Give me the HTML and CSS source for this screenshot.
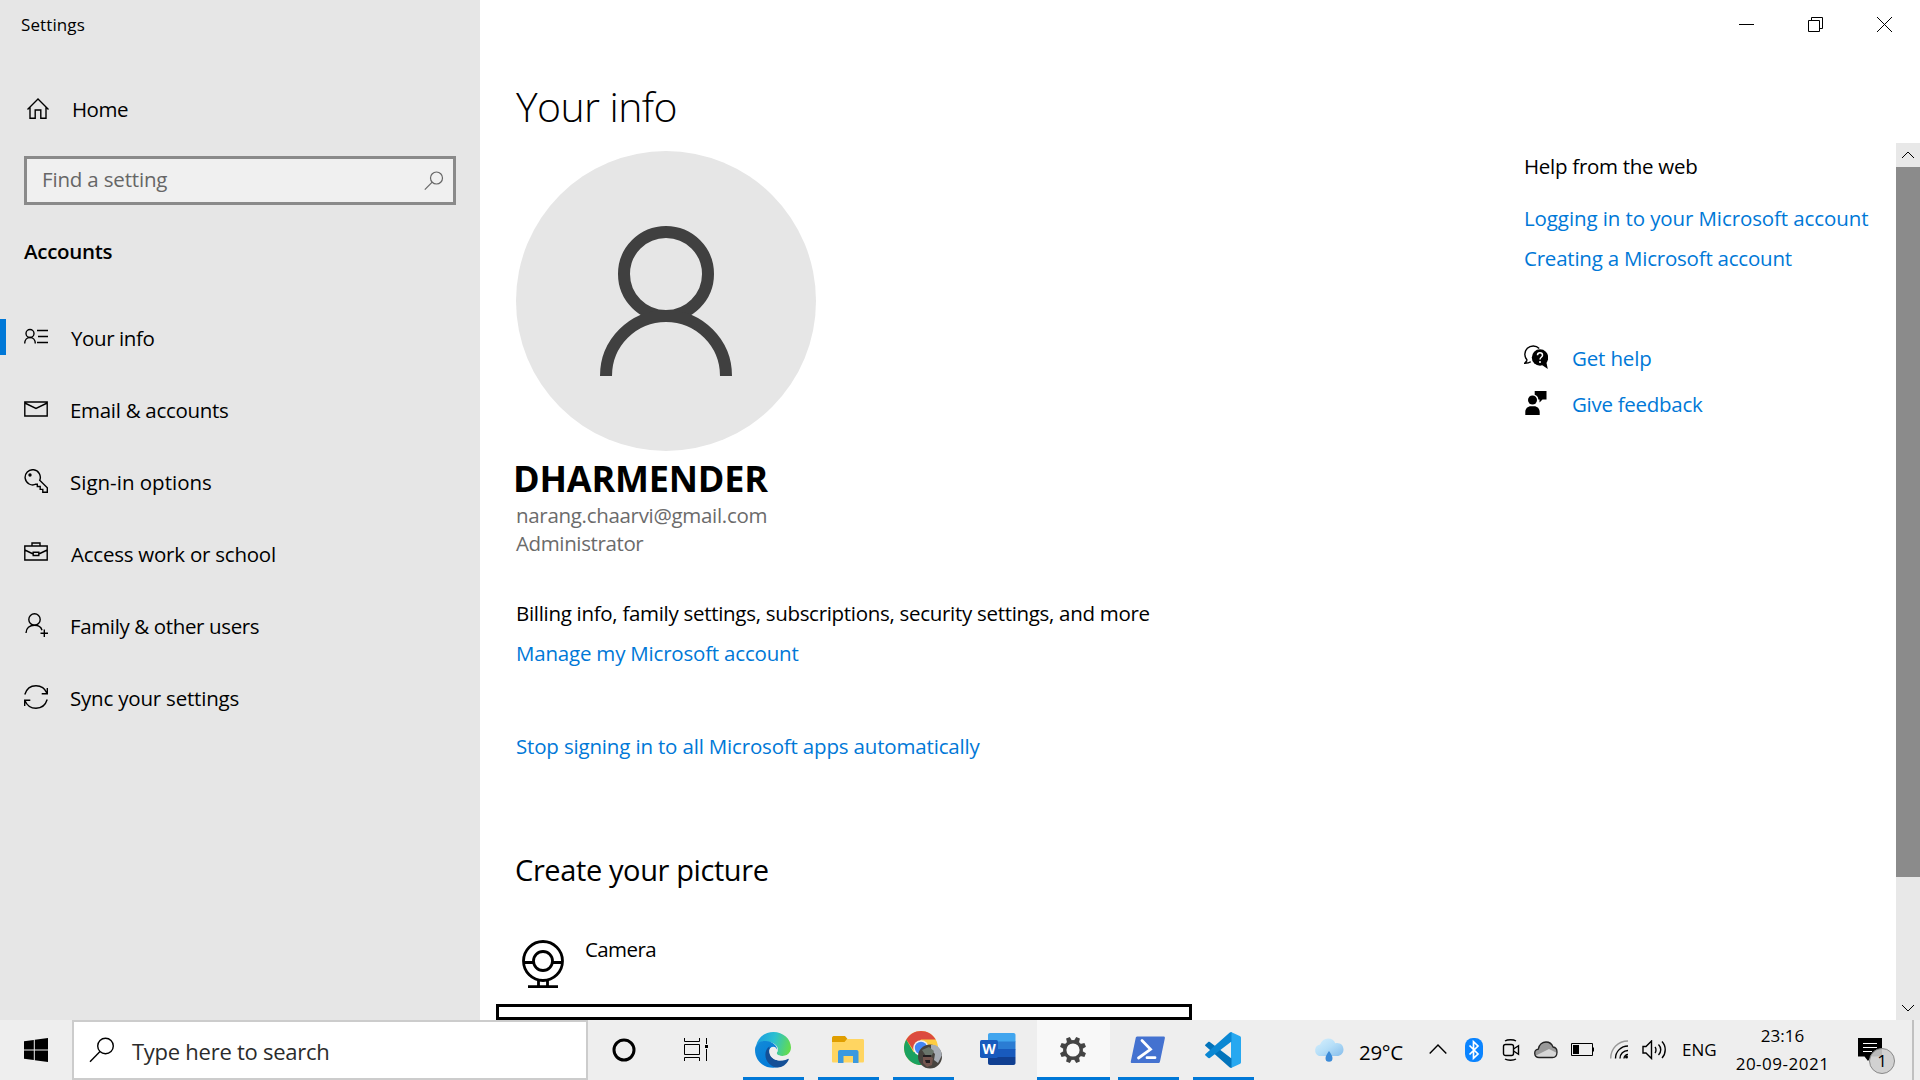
FILE: index.html
```html
<!DOCTYPE html>
<html lang="en">
  <head>
    <meta charset="utf-8">
    <title>Settings</title>
    <meta name="viewport" content="width=device-width, initial-scale=1">
    <link rel="stylesheet" href="styles.css">
  </head>
  <body>
    <div class="window">
      <aside class="sidebar">
        <div class="app-title">Settings</div>
        <a class="home">
          <svg width="24" height="24" viewBox="0 0 24 24" class="line-icon"><path d="M1.500 12.500 12 2l10.500 10.500M4 10.500V21.200h5.200v-8.200h5.600v8.200H20V10.500"/></svg>
          <span class="w-home">Home</span>
        </a>
        <div class="search">
          <span>Find a setting</span>
          <svg width="20" height="20" viewBox="0 0 20 20"><circle cx="12.500" cy="7" r="6"/><path d="M8.200 11.200.800 18.600"/></svg>
        </div>
        <h2 class="group">Accounts</h2>
        <nav class="nav">
          <a class="nav-item active">
            <svg width="24" height="24" viewBox="0 0 24 24" class="line-icon"><circle cx="6" cy="8.500" r="4"/><path d="M.7 18.500c0-3.500 2.200-6 5.300-6s5.300 2.500 5.300 6M13 5.500h11M14 11.500h10M13 17.500h11"/></svg>
            <span class="w-info">Your info</span>
          </a>
          <a class="nav-item">
            <svg width="24" height="24" viewBox="0 0 24 24" class="line-icon"><path d="M.8 5h22.400v14H.8zM.8 6l11.200 5.500L23.200 6"/></svg>
            <span class="w-email">Email &amp; accounts</span>
          </a>
          <a class="nav-item">
            <svg width="24" height="24" viewBox="0 0 24 24" class="line-icon"><path d="M15.700 11.300 23.300 18.700v4.600h-4.500v-2.900h-2.600v-2.900h-2.900v-2.300h-1.400a7.600 7.600 0 1 1 3.800-3.900z"/><circle cx="6" cy="6" r="1" fill="#000"/></svg>
            <span class="w-sign">Sign-in options</span>
          </a>
          <a class="nav-item">
            <svg width="24" height="24" viewBox="0 0 24 24" class="line-icon"><path d="M.8 5h22.400v14H.8zM8 5V2h8v3M.8 9l8.400 4M23.200 9l-8.400 4M9.200 11.200h5.600v3.300H9.200z"/></svg>
            <span class="w-work">Access work or school</span>
          </a>
          <a class="nav-item">
            <svg width="24" height="24" viewBox="0 0 24 24" class="line-icon"><circle cx="10.500" cy="6.500" r="5.700"/><path d="M2 20c0-4.800 3.600-7.800 8.500-7.800 3.800 0 6.700 2 7.500 5M20.300 16.500v7.500M16.500 20.300H24"/></svg>
            <span class="w-family">Family &amp; other users</span>
          </a>
          <a class="nav-item">
            <svg width="24" height="24" viewBox="0 0 24 24" class="line-icon"><path d="M.8 9.500C2.500 4 7 .8 12 .8c4.800 0 9 2.700 11 7.500M23.300 3v5.700h-5.600M23.200 14.500c-1.700 5.500-6.200 8.700-11.200 8.700-4.800 0-9-2.700-11-7.500M.7 21v-5.700h5.600"/></svg>
            <span class="w-sync">Sync your settings</span>
          </a>
        </nav>
      </aside>

      <main class="main">
        <div class="window-controls">
          <svg width="69" height="48" viewBox="0 0 69 48"><path d="M27 24.500h15"/></svg>
          <svg width="69" height="48" viewBox="0 0 69 48"><path d="M27.500 20.500h11v11h-11zM30.500 20.500v-3h11v11h-3"/></svg>
          <svg width="69" height="48" viewBox="0 0 69 48"><path d="M27 17l15 15M42 17 27 32"/></svg>
        </div>
        <h1>Your info</h1>
        <div class="scroll-area">
          <section class="profile">
            <svg class="avatar" width="300" height="300" viewBox="0 0 300 300">
              <circle cx="150" cy="150" r="150" fill="#e6e6e6"/>
              <g fill="none" stroke="#404040" stroke-width="12">
                <circle cx="150" cy="123" r="42"/>
                <path d="M90 225a60 60 0 0 1 120 0"/>
              </g>
            </svg>
            <div class="name">DHARMENDER</div>
            <div class="detail w-mail">narang.chaarvi@gmail.com</div>
            <div class="detail w-admin">Administrator</div>
            <p class="billing">Billing info, family settings, subscriptions, security settings, and more</p>
            <a class="link manage">Manage my Microsoft account</a>
            <a class="link stop">Stop signing in to all Microsoft apps automatically</a>
            <h2 class="picture-title">Create your picture</h2>
            <div class="camera">
              <svg width="42" height="50" viewBox="0 0 42 50"><g fill="none" stroke="#000" stroke-width="2.800"><circle cx="21" cy="21" r="19.500"/><circle cx="21" cy="21" r="9.500"/><path d="M1 22.500h10.500M30.500 22.500H41M16.500 40v6M25.500 40v6M6 46.700h30"/></g></svg>
              <span>Camera</span>
            </div>
            <div class="focus-box"></div>
          </section>

          <section class="help">
            <p>Help from the web</p>
            <a class="link w-log">Logging in to your Microsoft account</a>
            <a class="link w-create">Creating a Microsoft account</a>
            <div class="help-row first">
              <svg width="24" height="24" viewBox="0 0 24 24"><path d="M3.200 15.200A7.600 7.600 0 1 1 15.200 3.500M3.200 15.200.8 18.200c2.200 0 4.500-.4 6-1.500" fill="none" stroke="#000" stroke-width="1.400"/><circle cx="16" cy="12.500" r="8.200"/><path d="M18 20l5.800 4-1.500-7z"/><path d="M13.500 10.200c0-3.400 5-3.400 5 0 0 2-2.500 2.200-2.500 4.300M16 16v2" fill="none" stroke="#fff" stroke-width="1.500"/></svg>
              <a class="link w-get">Get help</a>
            </div>
            <div class="help-row">
              <svg width="24" height="24" viewBox="0 0 24 24"><circle cx="8.500" cy="9" r="4.500"/><path d="M1.300 24v-3c0-3.600 2.400-5.800 5.700-5.800h3c3.300 0 5.700 2.200 5.700 5.800v3zM10.700 0H22.500v8.500h-4l-3 3V8.500h-1.200c0-2.300-1.400-4-3.600-4.700z"/></svg>
              <a class="link w-give">Give feedback</a>
            </div>
          </section>

          <div class="scrollbar">
            <svg width="24" height="24" viewBox="0 0 24 24"><path d="M6 15l6-6 6 6"/></svg>
            <div class="thumb"></div>
            <svg width="24" height="24" viewBox="0 0 24 24"><path d="M6 9l6 6 6-6"/></svg>
          </div>
        </div>
      </main>
    </div>

    <footer class="taskbar">
      <div class="start">
        <svg width="24" height="24" viewBox="0 0 24 24"><path d="M0 3.300 9.800 2v9.500H0zM10.800 1.800 24 0v11.500H10.800zM0 12.500h9.800V22L0 20.700zM10.800 12.500H24V24l-13.200-1.800z"/></svg>
      </div>
      <div class="task-search">
        <svg width="26" height="26" viewBox="0 0 26 26"><circle cx="16.500" cy="9" r="7.800"/><path d="M11 14.500 1 24.800"/></svg>
        <span>Type here to search</span>
      </div>
      <div class="sys-button">
        <svg width="26" height="26" viewBox="0 0 26 26"><circle cx="13" cy="13" r="10" fill="none" stroke="#000" stroke-width="3"/></svg>
      </div>
      <div class="sys-button">
        <svg width="24" height="24" viewBox="0 0 24 24" class="taskview"><path d="M.5 0v3.500h15V0M.5 6.500h15v10H.5zM.5 23v-3.500h15V23M22.500 0v6M22.500 11v12"/><path d="M21 7h3v3h-3z" fill="#000" stroke="none"/></svg>
      </div>

      <div class="apps">
        <div class="app open">
          <svg width="36" height="36" viewBox="0 0 36 36">
            <defs>
              <linearGradient id="edgeTop" x1="0" y1=".3" x2="1" y2=".5"><stop offset="0" stop-color="#1b9de2"/><stop offset=".5" stop-color="#2cc0d0"/><stop offset="1" stop-color="#63dc4e"/></linearGradient>
              <linearGradient id="edgeLeft" x1="0" y1="0" x2=".7" y2="1"><stop offset="0" stop-color="#138bd8"/><stop offset="1" stop-color="#0078d7"/></linearGradient>
            </defs>
            <path d="M1 14C3 5 10 0 18.500 0 28 0 36 7 36 15.500c0 5-4 8.500-8.500 8.500-4.500 0-7-1.500-5.500-3.500 3-4-1-9-7-10.500C9 8.500 3 10 1 14z" fill="url(#edgeTop)"/>
            <path d="M0 18C0 12 5 8.500 11 9c7 .5 11.500 5 11.300 9.500C21 13 14 14 13.500 21c-.5 7 4 12 10.500 14C11 38.500 0 30 0 18z" fill="url(#edgeLeft)"/>
            <path d="M14.500 14.500C9 18 9 27 14.500 32c7 6.500 15.500 3.500 19.200-4.200.3-.8-.3-1.200-1-.8C24 31 14 27 14.500 18z" fill="#144f96"/>
            <path d="M22.300 19.500c-1.600 2.300.5 4.500 5.200 4.500 3.500 0 6.500-1.500 8-4.500-.3 3-1.500 5-2.500 6.800C23.500 31.500 14 27 14.300 19c.3-5 7-6.500 8 .5z" fill="#eee"/>
          </svg>
        </div>
        <div class="app open">
          <svg width="34" height="28" viewBox="0 0 34 28">
            <path d="M1 2c0-1 .6-2 1.600-2H14l2.500 3H31v6H1z" fill="#e09e00"/>
            <path d="M1 6h12.500l2.500-3h15.500c1 0 1.500.7 1.500 1.500V25c0 1-.6 1.500-1.500 1.500h-29C1.500 26.500 1 26 1 25z" fill="#ffd561"/>
            <path d="M7 27V16c0-1.200.8-2 2-2h16.500c1.200 0 2 .8 2 2v11H22v-7h-9.500v7z" fill="#3b99df"/>
          </svg>
        </div>
        <div class="app open">
          <svg width="38" height="40" viewBox="0 0 38 40">
            <circle cx="17" cy="18" r="17" fill="#ffcd40"/>
            <path d="M17 18 9.600 22.200 2.300 9.500A17 17 0 0 0 17 35l7.400-12.800z" fill="#1aa260"/>
            <path d="M2.300 9.500A17 17 0 0 1 31.700 9.500H17L9.400 20z" fill="#dc4b3e"/>
            <circle cx="17" cy="18" r="7.800" fill="#f2f2f2"/><circle cx="17" cy="18" r="6.200" fill="#4386f5"/>
            <circle cx="26" cy="26.500" r="12" fill="#47443f"/>
            <path d="M27 15c6-1 10.500 4 10.800 10.500L34 33l-4-3 1-6-4-4z" fill="#a7adb5"/>
            <path d="M18 20l7-3 5 4-2 4-6 1z" fill="#69756b"/><path d="M19 27l5-2 5 3-1 7-5 2-4-4z" fill="#74564f"/><path d="M19 25h8v2h-8zM21 30h5v3h-4z" fill="#211d20"/>
          </svg>
        </div>
        <div class="app">
          <svg width="36" height="34" viewBox="0 0 36 34">
            <path d="M8 2c0-1.200.8-2 2-2h23.500c1.200 0 2 .8 2 2v7H8z" fill="#41a5ee"/>
            <path d="M8 8.500h27.500v8H8z" fill="#2b7cd3"/><path d="M8 16h27.500v8H8z" fill="#185abd"/>
            <path d="M8 24h27.500v6c0 1.200-.8 2-2 2H10c-1.200 0-2-.8-2-2z" fill="#103f91"/>
            <rect y="7" width="18" height="18" rx="1.700" fill="#185abd"/>
            <text x="9" y="21" class="word-letter">W</text>
          </svg>
        </div>
        <div class="app open current">
          <svg width="28" height="28" viewBox="-14 -14 28 28">
            <circle r="8.300" fill="none" stroke="#444" stroke-width="3.400"/>
            <g fill="#444">
              <path id="tooth" d="M-2.700-9-2-13.200H2L2.700-9z" transform="rotate(22.500)"/>
              <use href="#tooth" transform="rotate(45)"/><use href="#tooth" transform="rotate(90)"/><use href="#tooth" transform="rotate(135)"/><use href="#tooth" transform="rotate(180)"/><use href="#tooth" transform="rotate(225)"/><use href="#tooth" transform="rotate(270)"/><use href="#tooth" transform="rotate(315)"/>
            </g>
          </svg>
        </div>
        <div class="app open">
          <svg width="36" height="28" viewBox="0 0 36 28">
            <path d="M7.500.5h26c1 0 1.600.7 1.400 1.600L30 25.500c-.2 1-1 1.500-1.800 1.500h-26c-1 0-1.600-.7-1.400-1.600L5.700 2C5.900 1 6.600.5 7.500.5z" fill="#4472d0"/>
            <path d="M12 4.500l8.500 8.800L8.500 22M17 21.700h8" fill="none" stroke="#fff" stroke-width="2.800" stroke-linecap="round"/>
          </svg>
        </div>
        <div class="app open">
          <svg width="36" height="36" viewBox="0 0 36 36">
            <path d="M26 0l8.700 4c.8.400 1.300 1 1.300 2v24c0 1-.5 1.600-1.300 2L26 36z" fill="#27a8f0"/>
            <path d="M.5 12.500 3 10.200c.6-.5 1.200-.5 1.800-.1L26.500 26.500V36c-.8 0-1.500-.3-2-.8L.5 14c-.6-.5-.6-1 0-1.500z" fill="#0273bb"/>
            <path d="M.5 23.500 3 25.800c.6.500 1.200.500 1.800.1L26.500 9.500V0c-.8 0-1.500.3-2 .8L.5 22c-.6.500-.6 1 0 1.500z" fill="#0a87d3"/>
          </svg>
        </div>
      </div>

      <div class="tray">
        <svg width="32" height="26" viewBox="0 0 32 26">
          <defs><linearGradient id="cloud" x1="0" y1="0" x2="1" y2="1"><stop offset="0" stop-color="#d8f0fd"/><stop offset=".5" stop-color="#b5def8"/><stop offset="1" stop-color="#86bdeb"/></linearGradient></defs>
          <path d="M6 19a6 6 0 0 1 1-11.500C8.500 3.500 11.500 1.500 15 1.500c3.600 0 6.300 2 7.200 4.700 5-1 8.300 2 8.300 6.300 0 4-3 6.500-6.500 6.500z" fill="url(#cloud)"/>
          <path d="M16 14c2 3 3.500 5 3.500 7.200a3.400 3.400 0 0 1-7 0C12.500 19 14 17 16 14z" fill="#3c8bd8"/>
        </svg>
        <span class="temp">29°C</span>
        <svg width="18" height="24" viewBox="0 0 18 24" class="tray-line"><path d="M.7 15.500 9 7l8.300 8.500"/></svg>
        <svg width="18" height="24" viewBox="0 0 18 24"><rect width="18" height="24" rx="8" fill="#0a84ff"/><path d="M4.500 7.500l8.500 8.500-4.500 4.300V3.700L13 8l-8.500 8.500" fill="none" stroke="#fff" stroke-width="1.700"/></svg>
        <svg width="18" height="24" viewBox="0 0 18 24" class="tray-line"><rect x="1.500" y="6.500" width="10" height="11" rx="2"/><path d="M11.500 11l5-3.300v8.600l-5-3.300M3 3c2.500-1.600 8.500-1.600 11 0M3 21c2.500 1.600 8.500 1.600 11 0"/></svg>
        <svg width="24" height="18" viewBox="0 0 24 18"><path d="M5 16.500c-5.300 0-5.800-7.500-.7-8.300C5 3.500 8.500 1 12 1c3.800 0 6 2.300 7 5 5.500.5 5.300 10.500-.5 10.500z" fill="#999"/><path d="M2 14.500 15 8l8 4c-.3 3-2 4.500-4.500 4.500H5c-1.300 0-2.300-.6-3-2z" fill="#d7d7d7"/><path d="M5 16.500c-5.300 0-5.800-7.500-.7-8.300C5 3.500 8.500 1 12 1c3.800 0 6 2.300 7 5 5.500.5 5.300 10.500-.5 10.500z" fill="none" stroke="#222" stroke-width="1.300"/></svg>
        <svg width="24" height="14" viewBox="0 0 24 14"><path d="M.5.500h21v12H.5z" fill="none" stroke="#000"/><path d="M2 2h6v9H2zM22 4.500h1v4h-1z"/></svg>
        <svg width="19" height="20" viewBox="0 0 19 20" class="tray-line"><path d="M.7 18.500C.7 8.500 8 1 18 1" stroke="#999"/><path d="M5.500 18.500C5.500 11.500 11 6 18 6M10 18.500c0-4.500 3.500-8 8-8M14 18.500c0-2 1.800-4 4-4"/><circle cx="16.500" cy="17" r="1.500" fill="#000" stroke="none"/></svg>
        <svg width="25" height="20" viewBox="0 0 25 20" class="tray-line"><path d="M1 6.500h3L9.500 1v17.500L4 13H1zM13 7c1.300 1.500 1.300 4.500 0 6M16.500 4.500c3 3 3 7.500 0 10.500M20 1.500c4.300 4.500 4.300 12 0 16.500"/></svg>
        <span class="lang">ENG</span>
        <div class="clock"><span>23:16</span><span class="date">20-09-2021</span></div>
        <div class="notify">
          <svg width="24" height="24" viewBox="0 0 24 24"><path d="M0 0h24v18.500H13.500L10 23l-3.500-4.500H0z"/><path d="M5 5.500h14M5 9.500h14M5 13.500h9" stroke="#fff" stroke-width="1.200"/></svg>
          <span class="badge">1</span>
        </div>
        <div class="peek"></div>
      </div>
    </footer>
  </body>
</html>
```
FILE: styles.css
```css
* {
  box-sizing: border-box;
}

body {
  margin: 0;
  height: 1080px;
  overflow: hidden;
  font-family: "Open Sans", "Noto Sans", sans-serif;
  font-size: 20.5px;
  line-height: 30px;
  color: #000;
  background: #fff;
}

svg {
  display: block;
  flex: none;
}

h1,
h2,
p {
  margin: 0;
  font-weight: 400;
}

span,
a,
p,
h1,
h2 {
  white-space: nowrap;
}

.window {
  display: flex;
  height: 1020px;
}

/* Sidebar */
.sidebar {
  width: 480px;
  background: #e6e6e6;
}

.app-title {
  padding-left: 21px;
  font-size: 17px;
  line-height: 49px;
  letter-spacing: 0.1px;
}

.line-icon {
  fill: none;
  stroke: #000;
  stroke-width: 1.4;
}

.home {
  display: flex;
  align-items: center;
  gap: 22px;
  height: 48px;
  margin-top: 36px;
  padding-left: 26px;
}

.search {
  display: flex;
  align-items: center;
  justify-content: space-between;
  height: 49px;
  margin: 23px 24px 0;
  padding: 0 9px 2px 15px;
  border: 3px solid #8a8a8a;
  background: #f0f0f0;
  color: #666;
  letter-spacing: -0.17px;
}

.search span {
  padding-bottom: 1px;
}

.search svg {
  margin-top: 2px;
  fill: none;
  stroke: #666;
  stroke-width: 1.2;
}

.group {
  margin: 31px 0 0 24px;
  font-size: 20.5px;
  font-weight: 600;
  letter-spacing: -0.3px;
}

.nav {
  margin-top: 35px;
}

.nav-item {
  display: flex;
  align-items: center;
  gap: 22px;
  height: 72px;
  padding-left: 24px;
}

.nav-item span {
  padding-top: 2px;
}

.nav-item.active {
  padding-left: 18px;
}

.nav-item.active::before {
  content: "";
  width: 6px;
  height: 36px;
  margin: 0 -4px 0 -18px;
  background: #0078d7;
}

.w-home {
  letter-spacing: -0.5px;
}

.w-info {
  margin-left: 1px;
  letter-spacing: -0.4px;
}

.w-email {
  letter-spacing: -0.3px;
}

.w-work {
  margin-left: 1px;
  letter-spacing: -0.23px;
}

.w-family {
  letter-spacing: -0.37px;
}

.w-sync {
  letter-spacing: -0.2px;
}

/* Main area */
.main {
  flex: 1;
  display: flex;
  flex-direction: column;
}

.window-controls {
  display: flex;
  justify-content: flex-end;
  height: 48px;
  padding-right: 1px;
}

.window-controls svg,
.scrollbar svg {
  fill: none;
  stroke: #000;
  stroke-width: 1;
}

h1 {
  margin: 31px 0 0 36px;
  font-size: 41px;
  font-weight: 300;
  line-height: 54px;
  letter-spacing: -0.6px;
}

.scroll-area {
  display: flex;
  height: 877px;
  margin-top: 10px;
  overflow: hidden;
}

.profile {
  width: 1044px;
  padding: 8px 0 0 36px;
}

.name {
  margin: 8px 0 2px -3px;
  font-size: 36px;
  font-weight: 700;
  line-height: 40px;
  letter-spacing: -0.2px;
}

.detail {
  line-height: 28px;
  color: #6b6b6b;
}

.w-mail {
  letter-spacing: -0.31px;
}

.w-admin {
  letter-spacing: -0.38px;
}

.link {
  display: block;
  line-height: 40px;
  color: #0078d7;
}

.billing {
  margin-top: 36px;
  line-height: 40px;
  letter-spacing: -0.3px;
}

.manage {
  letter-spacing: -0.2px;
}

.stop {
  margin-top: 53px;
  letter-spacing: -0.17px;
}

.picture-title {
  margin: 84px 0 0 -1px;
  font-size: 29px;
  line-height: 40px;
  letter-spacing: -0.39px;
}

.camera {
  display: flex;
  gap: 21px;
  height: 70px;
  margin-top: 44px;
  padding-left: 6px;
  letter-spacing: -0.6px;
}

.camera svg {
  margin-top: 6px;
}

.focus-box {
  width: 696px;
  height: 16px;
  margin-left: -20px;
  border: 3px solid #000;
}

.help {
  flex: 1;
  padding-top: 3px;
}

.help p {
  margin-bottom: 12px;
  line-height: 40px;
  letter-spacing: -0.28px;
}

.w-log {
  letter-spacing: -0.1px;
}

.w-create {
  letter-spacing: -0.22px;
}

.w-get {
  letter-spacing: -0.15px;
}

.w-give {
  letter-spacing: -0.28px;
}

.help-row {
  display: flex;
  align-items: center;
  gap: 24px;
  height: 40px;
  margin-top: 6px;
}

.help-row.first {
  margin-top: 60px;
}

.help-row svg {
  margin-bottom: 2px;
}

.scrollbar {
  width: 24px;
  display: flex;
  flex-direction: column;
  background: #e8e8e8;
}

.thumb {
  height: 710px;
  margin-bottom: auto;
  background: #8b8b8b;
}

/* Taskbar */
.taskbar {
  display: flex;
  height: 60px;
  background: #eee;
}

.start,
.sys-button {
  display: flex;
  align-items: center;
  justify-content: center;
  width: 72px;
}

.task-search {
  display: flex;
  align-items: center;
  gap: 17px;
  width: 516px;
  padding-left: 15px;
  border: 2px solid #ccc;
  background: #fff;
  font-size: 22px;
  letter-spacing: -0.26px;
  color: #2b2b2b;
}

.task-search span {
  padding-top: 2px;
}

.task-search svg,
.taskview,
.tray-line {
  fill: none;
  stroke: #000;
  stroke-width: 1.4;
}

.taskview {
  stroke-width: 1;
}

.apps {
  display: flex;
  gap: 2px;
  margin-left: 5px;
}

.app {
  display: flex;
  align-items: center;
  justify-content: center;
  width: 73px;
  padding-right: 2px;
  position: relative;
}

.app.open::after {
  content: "";
  position: absolute;
  left: 6px;
  right: 6px;
  bottom: 0;
  height: 3px;
  background: #0078d7;
}

.app.current {
  background: #f8f8f8;
}

.app.current::after {
  left: 0;
  right: 0;
}

.word-letter {
  font-size: 14px;
  font-weight: 700;
  fill: #fff;
  text-anchor: middle;
}

.tray {
  display: grid;
  grid-template-columns: 47px 69px 36px 37px 32px 37px 39px 32px 40px 54px 122px 54px 2px;
  align-items: center;
  margin-left: 53px;
}

.temp {
  margin-left: -1px;
  padding-top: 3px;
  letter-spacing: -0.3px;
}

.lang {
  font-size: 17px;
}

.clock {
  display: flex;
  flex-direction: column;
  align-items: center;
  width: 93px;
  font-size: 17px;
  line-height: 28px;
}

.date {
  letter-spacing: 0.5px;
}

.notify {
  position: relative;
}

.badge {
  position: absolute;
  left: 11px;
  top: 10px;
  width: 26px;
  height: 26px;
  border: 1px solid #888;
  border-radius: 50%;
  background: rgba(205, 205, 205, 0.9);
  font-size: 17px;
  line-height: 24px;
  text-align: center;
}

.peek {
  height: 60px;
  background: #c0c0c0;
}
```
